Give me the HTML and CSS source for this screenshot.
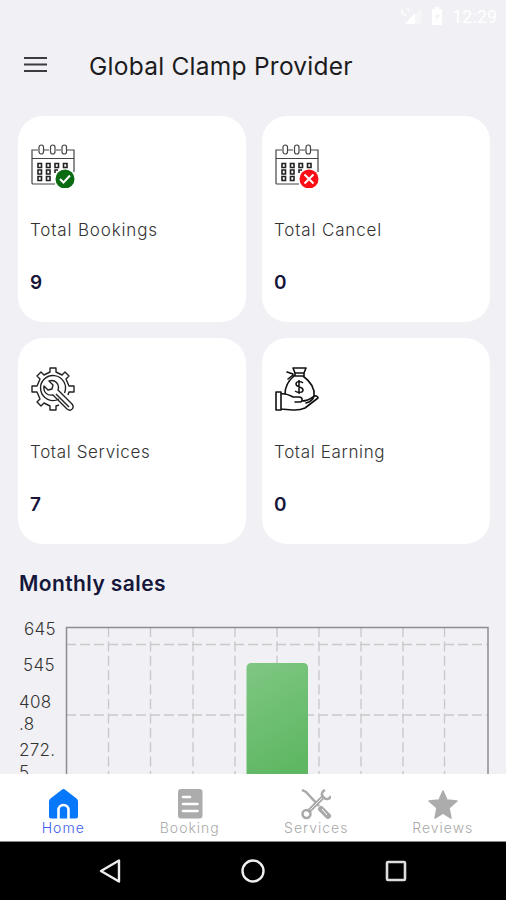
FILE: index.html
```html
<!DOCTYPE html>
<html lang="en">
<head>
<meta charset="utf-8">
<title>Global Clamp Provider</title>
<link rel="stylesheet" href="styles.css">
</head>
<body>
<div class="app">
  <div class="status">
    <svg width="24" height="20" viewBox="0 0 24 20"><path d="M3 3v3q0 3 4 3M8 2l3 3" fill="none" stroke="#fff" stroke-opacity=".8" stroke-width="1.500"/><path d="M16 7v11H6z" fill="#fff"/><path d="M22 3v15h-6V8z" fill="#fff" fill-opacity=".4"/></svg>
    <svg class="battery" width="10" height="18" viewBox="0 0 10 18"><path d="M0 2h3V0h4v2h3v16H0z" fill="#fff"/><path d="M6 5L3 10h2l-1 4 4-6H5z" fill="#f1f0f5"/></svg>
    <span>12:29</span>
  </div>
  <header class="header">
    <svg width="24" height="18" viewBox="0 0 24 18"><path d="M0 2h23M0 8.500h23M0 15h23" stroke="#3c3c40" stroke-width="2.200"/></svg>
    <h1>Global Clamp Provider</h1>
  </header>
  <main class="content">
    <section class="cards">
      <article class="card">
        <svg class="card-icon" viewBox="0 0 44 44">
          <g fill="none" stroke="#444" stroke-width="1.200">
            <path d="M7 6H1v33q0 1 1 1h22M13 6h5M25 6h5M36 6h7v22M1 14.500h42"/>
            <rect x="8" y="1" width="4.500" height="9" rx="2.200"/><rect x="19.500" y="1" width="4.500" height="9" rx="2.200"/><rect x="31" y="1" width="4.500" height="9" rx="2.200"/>
          </g>
          <g fill="none" stroke="#222" stroke-width="1.600">
            <path d="M7 19.500h3.500v4H7zM15.500 19.500H19v4h-3.500zM24 19.500h3.500v4H24zM32.500 19.500H36v4h-3.500zM7 26h3.500v4H7zM15.500 26H19v4h-3.500zM24 29v-3h3M7 32.500h3.500v4H7zM15.500 32.500H19v4h-3.500z"/>
          </g>
          <circle cx="34" cy="35" r="9.500" fill="#0a6b13"/>
          <path d="M29 35l3.500 3.500 6.500-7" fill="none" stroke="#fff" stroke-width="2"/>
        </svg>
        <p class="label">Total Bookings</p>
        <strong>9</strong>
      </article>
      <article class="card">
        <svg class="card-icon" viewBox="0 0 44 44">
          <g fill="none" stroke="#444" stroke-width="1.200">
            <path d="M7 6H1v33q0 1 1 1h22M13 6h5M25 6h5M36 6h7v22M1 14.500h42"/>
            <rect x="8" y="1" width="4.500" height="9" rx="2.200"/><rect x="19.500" y="1" width="4.500" height="9" rx="2.200"/><rect x="31" y="1" width="4.500" height="9" rx="2.200"/>
          </g>
          <g fill="none" stroke="#222" stroke-width="1.600">
            <path d="M7 19.500h3.500v4H7zM15.500 19.500H19v4h-3.500zM24 19.500h3.500v4H24zM32.500 19.500H36v4h-3.500zM7 26h3.500v4H7zM15.500 26H19v4h-3.500zM24 29v-3h3M7 32.500h3.500v4H7zM15.500 32.500H19v4h-3.500z"/>
          </g>
          <circle cx="34" cy="35" r="9.500" fill="#fa0d14"/>
          <path d="M29.500 30.500l9 9M38.500 30.500l-9 9" fill="none" stroke="#fff" stroke-width="2"/>
        </svg>
        <p class="label">Total Cancel</p>
        <strong>0</strong>
      </article>
      <article class="card lower">
        <svg class="card-icon" viewBox="0 0 44 44">
          <g fill="none" stroke="#222" stroke-width="1.400" stroke-linejoin="round">
            <path d="M28 38l-3 1v4h-6v-4l-6-3-3 3-4-4 3-3-3-7H1v-6h5l3-7-3-3 4-4 3 3 6-3V1h6v4l6 3 3-3 4 4-3 3 3 7h5v6h-5l-1 3"/>
            <path d="M28 32a12.500 12.500 0 1 1 5.500-6"/>
            <path d="M18 14l4 4-1 4-4 1-4-4c-1 6 3 10 9 9l14 14c4 3 8-1 5-5L27 23c2-6-3-11-9-9z"/>
            <path d="M25 27l13 13"/>
          </g>
        </svg>
        <p class="label tight">Total Services</p>
        <strong>7</strong>
      </article>
      <article class="card lower">
        <svg class="card-icon" viewBox="0 0 44 44">
          <g fill="none" stroke="#111" stroke-width="1.600" stroke-linejoin="round" stroke-linecap="round">
            <path d="M18 1h13l-2 5v3h-9V6zM20 6h8M19 9c-6 5-9 11-9 18M28 9c8 6 12 13 11 20-1 4-4 6-8 7M18 7l-6-2M18 8l-5 4"/>
            <path d="M1 25h5v18H1zM6 27c5-1 8 1 12 3h6c4 0 4 5 1 5h-5M27 34c5 0 7-1 11-4 2-2 5-1 5 1L30 41c-7 3-14 2-24 1"/>
          </g>
          <path d="M28 16c-2-2-7-2-7 1 0 4 7 2 7 6 0 3-5 3-8 1M24 13v14" fill="none" stroke="#111" stroke-width="1.500"/>
        </svg>
        <p class="label tight">Total Earning</p>
        <strong>0</strong>
      </article>
    </section>
    <h2>Monthly sales</h2>
    <section class="chart">
      <div class="axis">
        <span class="top">645</span><span class="second">545</span><span class="wrapped">408<br>.8</span><span>272.<br>5</span>
      </div>
      <svg class="plot" width="424" height="156" viewBox="0 0 424 156">
        <defs><linearGradient id="bar" x1="0" y1="0" x2=".3" y2="1"><stop stop-color="#7fc783"/><stop offset="1" stop-color="#5fb763"/></linearGradient></defs>
        <g fill="none" stroke="#c9c9cc" stroke-width="1.400">
          <path stroke-dasharray="10 4.400" d="M43.500 1v155M85.500 1v155M128 1v155M170 1v155M212 1v155M254 1v155M296 1v155M338 1v155M379.500 1v155"/>
          <path stroke-dasharray="10 4" d="M1 18.500h421M1 89h421"/>
        </g>
        <path d="M1.500 156V1.500h421.500V156" fill="none" stroke="#8d8c92" stroke-width="1.500"/>
        <path d="M181.500 156V42q0-5 5-5h51.500q5 0 5 5v114z" fill="url(#bar)"/>
      </svg>
    </section>
  </main>
  <nav class="tabs">
    <a class="tab active">
      <svg width="30" height="31" viewBox="0 0 30 31"><path d="M15.500 0q1 0 2 1l11 8.500q1.500 1 1.500 3v15q0 2-2 2H3q-2 0-2-2v-15q0-2 1.500-3L13.500 1q1-1 2-1z" fill="#0878fa"/><path d="M10.500 30v-9a5 5 0 0 1 10 0v9" fill="none" stroke="#fff" stroke-width="2.600"/></svg>
      <span>Home</span>
    </a>
    <a class="tab">
      <svg width="30" height="31" viewBox="0 0 30 31"><rect x="3" width="24.500" height="29.500" rx="3" fill="#acacac"/><path d="M8 8h7M8 15h14.500M8 22h14.500" stroke="#fff" stroke-width="2.600" stroke-linecap="round"/></svg>
      <span>Booking</span>
    </a>
    <a class="tab">
      <svg width="30" height="31" viewBox="0 0 30 31"><g fill="none" stroke="#a9a9a9"><path d="M1 1l4 2 13 14" stroke-width="2.500"/><path d="M20 20l7 7" stroke-width="6" stroke-linecap="round"/><path d="M21 20l5 6" stroke="#fff" stroke-width="1"/><path d="M7 23L23 7" stroke-width="4"/><path d="M8 22L23 7" stroke="#eee" stroke-width="1"/><path d="M24 1c-4 2-4 6-1 8s6 1 7-2" stroke-width="2.500"/><circle cx="5.500" cy="25" r="4" stroke-width="2.500"/></g></svg>
      <span>Services</span>
    </a>
    <a class="tab">
      <svg width="30" height="31" viewBox="0 0 30 31"><path d="M15 2l4 9 10 1-8 7 2 10-8-5-8 5 2-10-8-7 10-1z" fill="#acacac" stroke="#acacac" stroke-width="1.500" stroke-linejoin="round"/></svg>
      <span>Reviews</span>
    </a>
  </nav>
  <footer class="system">
    <svg width="24" height="26" viewBox="0 0 24 26"><path d="M21 2.500v21L3 13z" fill="none" stroke="#eee" stroke-width="2.400" stroke-linejoin="round"/></svg>
    <svg width="26" height="26" viewBox="0 0 26 26"><circle cx="13" cy="13" r="10.500" fill="none" stroke="#eee" stroke-width="2.400"/></svg>
    <svg width="24" height="26" viewBox="0 0 24 26"><rect x="3" y="4" width="18" height="18" rx="1" fill="none" stroke="#ddd" stroke-width="2.600"/></svg>
  </footer>
</div>
</body>
</html>
```

FILE: styles.css
```css
* { box-sizing: border-box; }
body { margin: 0; }
h1, h2, p { margin: 0; }
svg { display: block; flex: none; }
.app {
  width: 506px;
  height: 900px;
  display: flex;
  flex-direction: column;
  overflow: hidden;
  background: #f1f0f5;
  font-family: Inter, "Open Sans", sans-serif;
}
.status {
  height: 32px;
  flex: none;
  display: flex;
  justify-content: flex-end;
  align-items: center;
  padding-right: 9px;
  color: #fff;
  font: 18px Roboto, sans-serif;
}
.battery { margin: 0 10px 0 9px; }
.header {
  height: 84px;
  flex: none;
  display: flex;
  align-items: flex-start;
  padding: 24px 0 0 24px;
}
.header h1 {
  margin: -6px 0 0 41px;
  font-size: 24.500px;
  line-height: 32px;
  font-weight: 400;
  letter-spacing: .25px;
  color: #1c1c20;
  white-space: nowrap;
}
.content {
  height: 658px;
  flex: none;
  overflow: hidden;
}
.cards {
  display: grid;
  grid-template-columns: 228px 228px;
  grid-auto-rows: 206px;
  gap: 16px;
  padding-left: 18px;
}
.card {
  border-radius: 25px;
  background: #fff;
  padding: 28px 13px 0;
}
.card.lower .card-icon { margin: 1px 0 -1px; }
.card-icon { width: 44px; height: 44px; }
.label {
  width: max-content;
  margin: 30px 0 0 -1px;
  font-size: 17px;
  line-height: 24px;
  font-weight: 300;
  letter-spacing: .85px;
  color: #333;
}
.label.tight { letter-spacing: .65px; }
.card strong {
  display: block;
  margin: 28px 0 0 -1px;
  font-size: 19px;
  line-height: 26px;
  font-weight: 600;
  color: #17163a;
}
.content h2 {
  margin: 24px 0 0 19px;
  font-size: 21px;
  line-height: 32px;
  font-weight: 600;
  letter-spacing: .4px;
  color: #15173a;
  width: max-content;
}
.chart {
  display: flex;
  margin-top: 26px;
}
.axis {
  width: 65px;
  margin-top: -8px;
  padding-left: 19px;
  display: flex;
  flex-direction: column;
  font-size: 17px;
  line-height: 22px;
  font-weight: 300;
  letter-spacing: .3px;
  color: #333;
}
.axis .top { padding-left: 5px; margin-bottom: 14px; }
.axis .second { padding-left: 4px; margin-bottom: 15px; }
.axis .wrapped { margin-bottom: 4px; }
.tabs {
  height: 68px;
  flex: none;
  display: grid;
  grid-template-columns: repeat(4, 1fr);
  background: #fff;
  border-bottom: 1px solid #888;
}
.tab {
  display: flex;
  flex-direction: column;
  align-items: center;
  padding-top: 15px;
  color: #aaa;
  font-size: 14px;
  line-height: 16px;
  font-weight: 300;
  letter-spacing: 1px;
}
.active { color: #3b5bed; }
.system {
  flex: 1;
  display: flex;
  justify-content: center;
  align-items: center;
  gap: 118px;
  background: #000;
}
```
